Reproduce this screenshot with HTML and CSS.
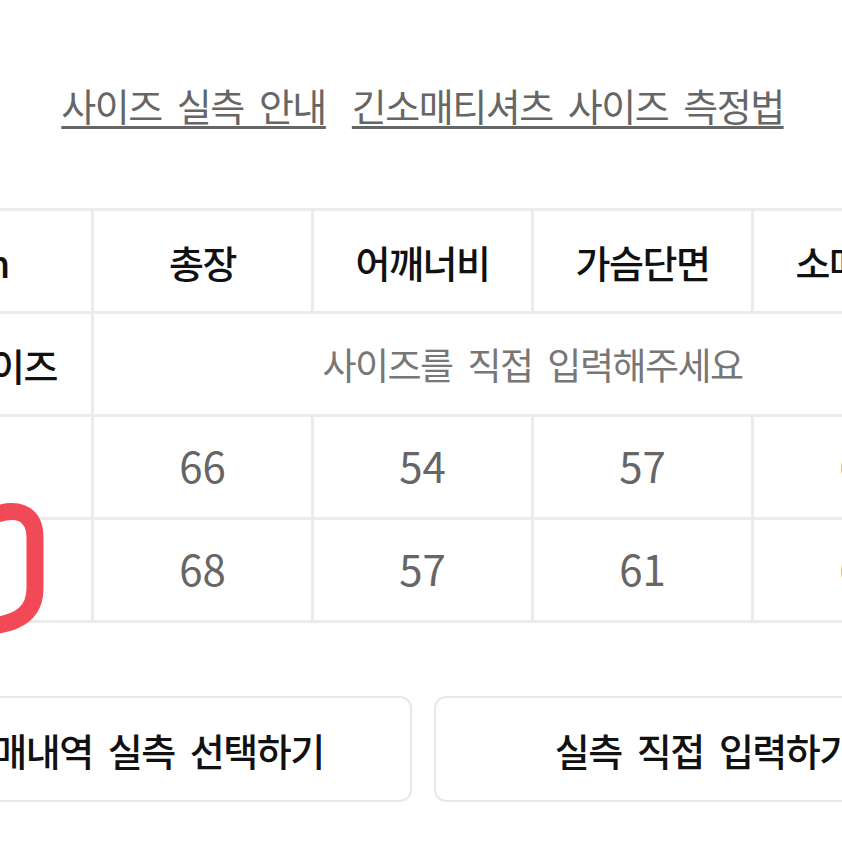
FILE: index.html
```html
<!DOCTYPE html>
<html lang="ko">
<head>
  <meta charset="UTF-8" />
  <meta name="viewport" content="width=device-width, initial-scale=1" />
  <title>사이즈 실측</title>
  <link rel="stylesheet" href="styles.css">
</head>
<body>

<div class="page">
  <div class="sheet">
    <p class="guide">
      <a href="#">사이즈 실측 안내</a>
      <a href="#">긴소매티셔츠 사이즈 측정법</a>
    </p>

    <div class="size-table">
      <div class="cell head">cm</div>
      <div class="cell head">총장</div>
      <div class="cell head">어깨너비</div>
      <div class="cell head">가슴단면</div>
      <div class="cell head">소매길이</div>

      <div class="cell head">내 사이즈</div>
      <div class="cell hint span4">사이즈를 직접 입력해주세요</div>

      <div class="cell head">M</div>
      <div class="cell num">66</div>
      <div class="cell num">54</div>
      <div class="cell num">57</div>
      <div class="cell num">62</div>

      <div class="cell head">L</div>
      <div class="cell num">68</div>
      <div class="cell num">57</div>
      <div class="cell num">61</div>
      <div class="cell num">63</div>
    </div>

    <div class="actions">
      <button class="btn-opcao">구매내역 실측 선택하기</button>
      <button class="btn-opcao">실측 직접 입력하기</button>
    </div>
  </div>

  <!-- marcação à mão sobre a linha escolhida -->
  <svg class="marker" width="60" height="160" viewBox="0 0 60 160">
    <path d="M -6 27 C 14 20, 35 22, 35 50 L 35 100 C 35 124, 20 134, -6 138" fill="none" stroke="#f14a56" stroke-width="17" stroke-linecap="round" stroke-linejoin="round" />
  </svg>
</div>

</body>
</html>
```

FILE: styles.css
```css
* { box-sizing: border-box; margin: 0; padding: 0; }
body {
  font-family: "Noto Sans CJK KR", "Noto Sans", sans-serif;
  background: #fff;
  color: #111;
  overflow: hidden;
}
.page {
  position: relative;
  width: 842px;
  height: 842px;
  overflow: hidden;
}
.sheet {
  width: 1103px;
  margin-left: -129px;
}
.guide {
  padding-top: 82px;
  display: flex;
  justify-content: center;
  gap: 26px;
  font-size: 38px;
  line-height: 46px;
  letter-spacing: -1.5px;
  word-spacing: 6px;
}
.guide a {
  color: #666;
  text-decoration: underline;
  text-decoration-thickness: 3px;
  text-underline-offset: 5px;
}
.size-table {
  margin-top: 80px;
  display: grid;
  grid-template-columns: repeat(5, 217px);
  grid-auto-rows: 100px;
  gap: 3px;
  padding: 3px;
  background: #ebebeb;
}
.cell {
  background: #fff;
  display: flex;
  align-items: center;
  justify-content: center;
  font-size: 38px;
  letter-spacing: -1.5px;
  word-spacing: 6px;
}
.head {
  color: #111;
  font-weight: 500;
}
.hint {
  color: #777;
  font-size: 37px;
}
.span4 {
  grid-column: span 4;
}
.num {
  color: #666;
  font-size: 42px;
  letter-spacing: 0;
  padding-bottom: 6px;
}
.actions {
  margin-top: 73px;
  display: flex;
  gap: 22px;
}
.btn-opcao {
  flex: 1;
  height: 106px;
  background: #fff;
  border: 2px solid #e8e8e8;
  border-radius: 12px;
  font-family: inherit;
  font-size: 38px;
  font-weight: 500;
  color: #111;
  letter-spacing: -1.5px;
  word-spacing: 6px;
  cursor: pointer;
}
.marker {
  position: absolute;
  left: 0;
  top: 488px;
}
```
